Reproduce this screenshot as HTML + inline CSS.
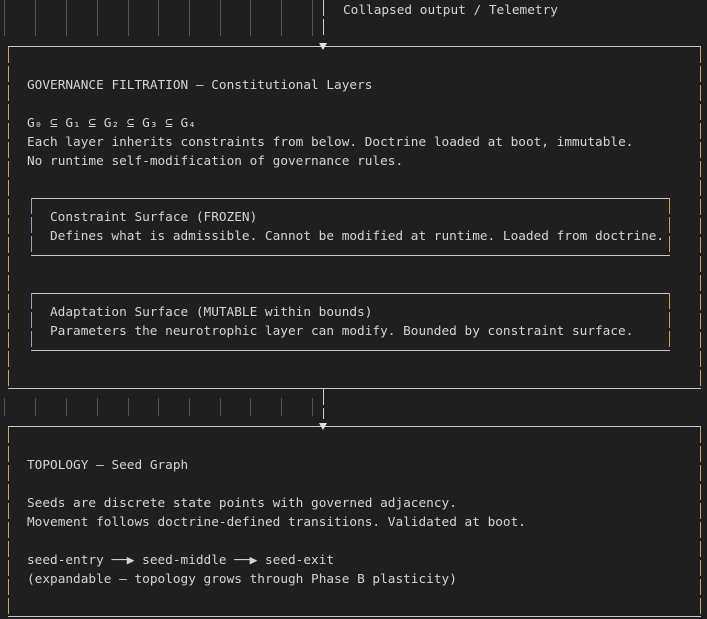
<!DOCTYPE html>
<html><head><style>
html,body{margin:0;padding:0;background:#1f1f1f;width:707px;height:619px;overflow:hidden}
body{position:relative;font-family:"DejaVu Sans Mono","Liberation Mono",monospace;font-size:12.75px;color:#d4d4d4}
.t{position:absolute;white-space:pre;line-height:19px;margin-top:1px}
.vl{position:absolute;width:1px;background:repeating-linear-gradient(to bottom,#c9a35a 0 16px,transparent 16px 19px)}
.vb{position:absolute;width:1px;background:repeating-linear-gradient(to bottom,#8fa8c0 0 16px,transparent 16px 19px)}
.vg{position:absolute;width:1px;background:repeating-linear-gradient(to bottom,#d0d0d0 0 16px,transparent 16px 19px)}
.tick{position:absolute;width:1px;background:#555}
.hl{position:absolute;height:1px;background:#c8c8c8}
.tri{position:absolute;width:0;height:0;border-left:4px solid transparent;border-right:4px solid transparent;border-top:7px solid #e0e0e0}
</style></head><body>
<div class="tick" style="left:4px;top:0;height:36px"></div>
<div class="tick" style="left:35px;top:0;height:36px"></div>
<div class="tick" style="left:66px;top:0;height:36px"></div>
<div class="tick" style="left:97px;top:0;height:36px"></div>
<div class="tick" style="left:128px;top:0;height:36px"></div>
<div class="tick" style="left:158px;top:0;height:36px"></div>
<div class="tick" style="left:189px;top:0;height:36px"></div>
<div class="tick" style="left:220px;top:0;height:36px"></div>
<div class="tick" style="left:250px;top:0;height:36px"></div>
<div class="tick" style="left:281px;top:0;height:36px"></div>
<div class="tick" style="left:312px;top:0;height:36px"></div>
<div class="vg" style="left:323px;top:0;height:37px"></div>
<div class="t" style="left:343px;top:0">Collapsed output / Telemetry</div>

<div class="hl" style="left:8px;top:46px;width:693px"></div>
<div class="tri" style="left:319px;top:43px"></div>
<div class="vl" style="left:8px;top:47px;height:341px"></div>
<div class="vl" style="left:700px;top:47px;height:341px"></div>
<div class="hl" style="left:8px;top:388px;width:693px"></div>
<div class="t" style="left:27px;top:75px">GOVERNANCE FILTRATION — Constitutional Layers</div>
<div class="t" style="left:27px;top:113px">G₀ ⊆ G₁ ⊆ G₂ ⊆ G₃ ⊆ G₄
Each layer inherits constraints from below. Doctrine loaded at boot, immutable.
No runtime self-modification of governance rules.</div>

<div class="hl" style="left:31px;top:198px;width:639px"></div>
<div class="hl" style="left:31px;top:255px;width:639px"></div>
<div class="vb" style="left:31px;top:198px;height:57px"></div>
<div class="vl" style="left:669px;top:198px;height:57px"></div>
<div class="t" style="left:50px;top:207px">Constraint Surface (FROZEN)
Defines what is admissible. Cannot be modified at runtime. Loaded from doctrine.</div>

<div class="hl" style="left:31px;top:293px;width:639px"></div>
<div class="hl" style="left:31px;top:350px;width:639px"></div>
<div class="vb" style="left:31px;top:293px;height:57px"></div>
<div class="vl" style="left:669px;top:293px;height:57px"></div>
<div class="t" style="left:50px;top:302px">Adaptation Surface (MUTABLE within bounds)
Parameters the neurotrophic layer can modify. Bounded by constraint surface.</div>

<div class="tick" style="left:4px;top:398px;height:18px"></div>
<div class="tick" style="left:35px;top:398px;height:18px"></div>
<div class="tick" style="left:66px;top:398px;height:18px"></div>
<div class="tick" style="left:97px;top:398px;height:18px"></div>
<div class="tick" style="left:128px;top:398px;height:18px"></div>
<div class="tick" style="left:158px;top:398px;height:18px"></div>
<div class="tick" style="left:189px;top:398px;height:18px"></div>
<div class="tick" style="left:220px;top:398px;height:18px"></div>
<div class="tick" style="left:250px;top:398px;height:18px"></div>
<div class="tick" style="left:281px;top:398px;height:18px"></div>
<div class="tick" style="left:312px;top:398px;height:18px"></div>
<div class="vg" style="left:323px;top:389px;height:30px"></div>

<div class="hl" style="left:8px;top:426px;width:693px"></div>
<div class="tri" style="left:319px;top:423px"></div>
<div class="vl" style="left:8px;top:427px;height:189px"></div>
<div class="vl" style="left:700px;top:427px;height:189px"></div>
<div class="hl" style="left:8px;top:616px;width:693px"></div>
<div class="t" style="left:27px;top:455px">TOPOLOGY — Seed Graph</div>
<div class="t" style="left:27px;top:493px">Seeds are discrete state points with governed adjacency.
Movement follows doctrine-defined transitions. Validated at boot.</div>
<div class="t" style="left:27px;top:550px">seed-entry ──▶ seed-middle ──▶ seed-exit
(expandable — topology grows through Phase B plasticity)</div>
</body></html>
